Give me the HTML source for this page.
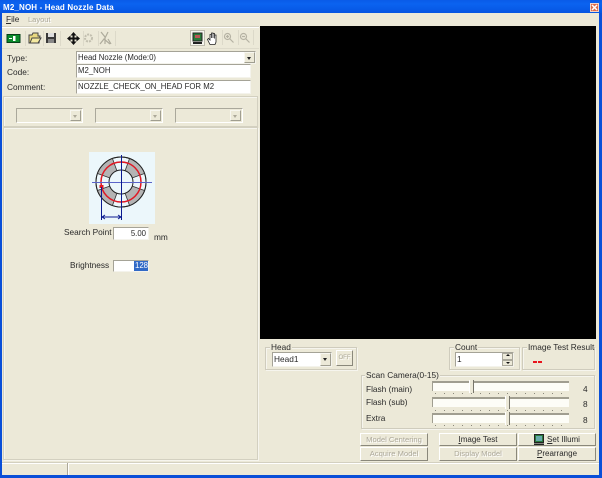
<!DOCTYPE html>
<html><head><meta charset="utf-8">
<style>
html,body{margin:0;padding:0}
body{width:602px;height:478px;overflow:hidden;position:relative;background:#ece9d8;font:8.3px "Liberation Sans",sans-serif;color:#2a2a2a}
div,span{position:absolute;box-sizing:border-box;white-space:nowrap}
.t{line-height:11px;height:11px}
.dis{color:#aca899;text-shadow:1px 1px 0 #fff}
.input{background:#fff;border:1px solid;border-color:#a5a397 #f4f3ec #f4f3ec #a5a397;line-height:11px;padding-left:1px;font-size:7.8px}
.combod{background:#ece9d8;border:1px solid;border-color:#aaa89b #fff #fff #aaa89b}
.arr{right:1px;top:1px;bottom:1px;width:11px;background:#ece9d8;border:1px solid;border-color:#f8f7f0 #a09e90 #a09e90 #f8f7f0}
.arr:after{content:"";position:absolute;left:2px;top:4px;border:2.5px solid transparent;border-top:3px solid #222;border-bottom:0}
.arr.d:after{border-top-color:#aca899}
.grp{border:1px solid #cfccbd;box-shadow:inset 1px 1px 0 #f6f5ee,1px 1px 0 #f6f5ee}
.glabel{background:#ece9d8;line-height:11px;height:11px;padding:0 1px}
.btn{background:#ece9d8;border:1px solid;border-color:#fff #8a887b #8a887b #fff;text-align:center;line-height:12px;font-size:8px}
.btn.dis{font-size:7.6px}
.slider{left:432px;width:137px;background:#fdfdf7;border-top:2px solid #a09e90;border-left:1px solid #a09e90}
.thumb{width:5px;height:13px;background:#ece9d8;border-right:1px solid #77756a;border-left:1px solid #fff;z-index:2}
.ticks{left:435px;width:131px;height:1px;background:repeating-linear-gradient(90deg,#8a887b 0 1px,transparent 1px 9px)}
</style></head><body>
<div style="left:0;top:0;width:602px;height:478px;border:solid #0a4fd8;border-width:0 3px 3px 2px;z-index:5;pointer-events:none"></div>
<div style="left:0;top:0;width:602px;height:13px;background:linear-gradient(180deg,#0a5be8,#0b63f0 30%,#0655e2);z-index:6"></div>
<div class="t" style="left:3px;top:2px;color:#fff;font-weight:bold;font-size:8px;letter-spacing:.15px;z-index:7">M2_NOH - Head Nozzle Data</div>
<div style="left:590px;top:3px;width:9px;height:9px;background:#dc6a4a;border:1px solid #f3d5c8;z-index:7"><svg style="position:absolute;left:0;top:0" width="7" height="7"><path d="M1 1L6 6M6 1L1 6" stroke="#fff" stroke-width="1.5"/></svg></div>

<div class="t" style="left:6px;top:14px"><u>F</u>ile</div>
<div class="t dis" style="left:28px;top:14px;font-size:7.5px">Layout</div>
<div style="left:2px;top:26px;width:257px;height:1px;background:#d3d0c0"></div>
<div style="left:2px;top:27px;width:257px;height:1px;background:#fff"></div>
<div style="left:2px;top:48px;width:257px;height:1px;background:#dedbcb"></div>

<!-- toolbar icons -->
<svg style="position:absolute;left:0;top:26px" width="260" height="24">
<rect x="7" y="8.500" width="13" height="8" fill="#0a8a2a" stroke="#06401a"/><rect x="13" y="10" width="2.500" height="5" fill="#fff"/><path d="M9 12.500h3" stroke="#fff"/>
<path d="M29 17V9h3l1-2h5v3h2l-1 7z" fill="#e8d880" stroke="#444"/><path d="M30 17l2-5h9l-3 5z" fill="#f4e9a0" stroke="#444"/>
<rect x="46" y="7" width="10" height="10" fill="#3a3a3a"/><rect x="48" y="7" width="6" height="4" fill="#ddd"/><rect x="48" y="13" width="6" height="4" fill="#888"/>
<path d="M73.500 8v9M69 12.500h9" stroke="#111" stroke-width="2"/><path d="M73.500 6l-3 3.500h6zM73.500 19l-3-3.500h6zM67 12.500l3.500-3v6zM80 12.500l-3.500-3v6z" fill="#111"/>
<circle cx="88.500" cy="12" r="3.500" fill="none" stroke="#c2bfaf" stroke-width="2" stroke-dasharray="2 1"/>
<path d="M101 6l4 5v7M108 6l-3 6M100 18l4-5 6 5M108 13l3 5" fill="none" stroke="#aeab9c" stroke-width="1.200"/>
<rect x="190.500" y="4.500" width="14" height="15" fill="#f6f5ee" stroke="#bdbbad"/>
<rect x="193" y="7" width="9" height="8" fill="#2a7a3a" stroke="#222"/><rect x="195" y="9" width="5" height="3" fill="#b55"/><rect x="193" y="16" width="9" height="2" fill="#222"/>
<path d="M210 18.500L207.500 13.500l1-1 1.500 1.500V8.500h1.500V12V7h1.500v5V7.500h1.500V12.500V9h1.500v7l-1 2.500z" fill="#fff" stroke="#222" stroke-width=".8"/>
<circle cx="227.500" cy="10.500" r="3" fill="none" stroke="#b5b2a3" stroke-width="1.200"/><path d="M229.500 12.500l4 4M226 10.500h3M227.500 9v3" stroke="#b5b2a3" stroke-width="1.200"/>
<circle cx="243.500" cy="10.500" r="3" fill="none" stroke="#b5b2a3" stroke-width="1.200"/><path d="M245.500 12.500l4 4M242 10.500h3" stroke="#b5b2a3" stroke-width="1.200"/>
<path d="M222.500 4v15M238.500 4v15M253.500 4v15M60.500 5v15M98.500 5v15M115.500 5v15M25.500 5v15M43.500 5v15M83.500 5v15" stroke="#dcd9c9"/>
</svg>

<!-- form -->
<div class="t" style="left:7px;top:53px">Type:</div>
<div class="t" style="left:7px;top:67px">Code:</div>
<div class="t" style="left:7px;top:82px">Comment:</div>
<div class="input" style="left:76px;top:51px;width:180px;height:13px">Head Nozzle (Mode:0)<span class="arr" style="right:0;top:0;bottom:0"></span></div>
<div class="input" style="left:76px;top:64px;width:175px;height:14px">M2_NOH</div>
<div class="input" style="left:76px;top:80px;width:175px;height:14px">NOZZLE_CHECK_ON_HEAD FOR M2</div>

<div style="left:3px;top:96px;width:255px;height:31px;border:1px solid #d3d0c0;box-shadow:inset 1px 1px 0 #f6f5ee"></div>
<div class="combod" style="left:16px;top:108px;width:67px;height:15px"><span class="arr d"></span></div>
<div class="combod" style="left:95px;top:108px;width:68px;height:15px"><span class="arr d"></span></div>
<div class="combod" style="left:175px;top:108px;width:68px;height:15px"><span class="arr d"></span></div>
<div style="left:3px;top:127px;width:255px;height:333px;border:1px solid #d3d0c0;box-shadow:inset 1px 1px 0 #f6f5ee,1px 1px 0 #f6f5ee"></div>

<!-- nozzle diagram -->
<svg style="position:absolute;left:89px;top:152px" width="66" height="72">
<rect width="66" height="72" fill="#ecf7fb"/>
<circle cx="32" cy="30" r="25" fill="#ecf7fb" stroke="#222"/>
<circle cx="32" cy="30" r="18.500" fill="none" stroke="#b4b4b4" stroke-width="13" stroke-dasharray="16.100 12.950" stroke-dashoffset="-6.460"/>
<circle cx="32" cy="30" r="25" fill="none" stroke="#222"/>
<circle cx="32" cy="30" r="12" fill="#ecf7fb" stroke="#222"/>
<path d="M43.300 34.100L55.500 38.550M43.300 25.900L55.500 21.450M20.700 34.100L8.500 38.550M20.700 25.900L8.500 21.450M36.100 41.300L40.550 53.500M27.900 41.300L23.450 53.500M36.100 18.700L40.550 6.500M27.900 18.700L23.450 6.500" stroke="#333" stroke-width=".8"/>
<circle cx="32" cy="30" r="20" fill="none" stroke="#e01824" stroke-width="1.500"/>
<rect x="10.500" y="33" width="4" height="3" fill="#e01824"/>
<path d="M3 30.500H63" stroke="#5a64c8"/>
<path d="M32.500 3V68M12.500 35V68" stroke="#0a1a90"/>
<path d="M13 65H32M13 65l3-2M13 65l3 2M32 65l-3-2M32 65l-3 2" stroke="#0a1a90" fill="none"/>
</svg>
<div class="t" style="left:64px;top:227px">Search Point</div>
<div class="input" style="left:113px;top:227px;width:36px;height:13px;text-align:right;padding-right:2px">5.00</div>
<div class="t" style="left:154px;top:232px">mm</div>
<div class="t" style="left:70px;top:260px">Brightness</div>
<div class="input" style="left:113px;top:260px;width:36px;height:12px"><span style="right:0;top:0;width:14px;height:10px;background:#3169c6;color:#fff;line-height:10px;text-align:right">128</span></div>

<!-- video -->
<div style="left:260px;top:26px;width:336px;height:313px;background:#000"></div>

<!-- head -->
<div class="grp" style="left:265px;top:347px;width:92px;height:23px"></div>
<div class="glabel" style="left:270px;top:342px">Head</div>
<div class="input" style="left:272px;top:352px;width:60px;height:15px;line-height:13px;font-size:8.3px">Head1<span class="arr" style="right:0;top:0;bottom:0"></span></div>
<div class="btn dis" style="left:336px;top:350px;width:17px;height:16px;font-size:6px;line-height:14px">OFF</div>

<!-- count -->
<div class="grp" style="left:449px;top:347px;width:71px;height:23px"></div>
<div class="glabel" style="left:454px;top:342px">Count</div>
<div class="input" style="left:455px;top:352px;width:59px;height:15px;line-height:13px;font-size:8.3px">1
<span style="right:0;top:0;width:11px;height:6.500px;background:#ece9d8;border:1px solid #aaa89b"></span>
<span style="right:0;top:6.500px;width:11px;height:6.500px;background:#ece9d8;border:1px solid #aaa89b"></span>
<span style="right:3px;top:1px;border:2px solid transparent;border-bottom:2px solid #111;border-top:0"></span>
<span style="right:3px;top:9px;border:2px solid transparent;border-top:2px solid #111;border-bottom:0"></span></div>

<!-- result -->
<div class="grp" style="left:522px;top:347px;width:73px;height:23px"></div>
<div class="glabel" style="left:527px;top:342px;padding:0 0 0 1px">Image Test Result</div>
<div style="left:533px;top:361px;width:4px;height:2px;background:#e8141c"></div>
<div style="left:538px;top:361px;width:4px;height:2px;background:#e8141c"></div>

<!-- scan camera -->
<div class="grp" style="left:361px;top:375px;width:234px;height:54px"></div>
<div class="glabel" style="left:365px;top:370px">Scan Camera(0-15)</div>
<div class="t" style="left:366px;top:384px">Flash (main)</div>
<div class="t" style="left:366px;top:397px">Flash (sub)</div>
<div class="t" style="left:366px;top:413px">Extra</div>
<div class="slider" style="top:381px;height:10px"></div><div class="thumb" style="left:469px;top:380px"></div><div class="ticks" style="top:393px"></div>
<div class="slider" style="top:397px;height:10px"></div><div class="thumb" style="left:505px;top:396px"></div><div class="ticks" style="top:410px"></div>
<div class="slider" style="top:413px;height:10px"></div><div class="thumb" style="left:505px;top:412px"></div><div class="ticks" style="top:425px"></div>
<div class="t" style="left:583px;top:384px">4</div>
<div class="t" style="left:583px;top:399px">8</div>
<div class="t" style="left:583px;top:415px">8</div>

<!-- buttons -->
<div class="btn dis" style="left:360px;top:433px;width:68px;height:13px;line-height:11px">Model Centering</div>
<div class="btn" style="left:439px;top:433px;width:78px;height:13px;line-height:11px"><u>I</u>mage Test</div>
<div class="btn" style="left:518px;top:433px;width:78px;height:13px;line-height:11px;padding-left:13px"><u>S</u>et Illumi</div>
<svg style="position:absolute;left:533px;top:434px" width="12" height="12"><rect x="1.500" y=".5" width="9" height="8" fill="#2a7a3a" stroke="#222"/><rect x="3" y="2" width="6" height="5" fill="#6aa"/><rect x="1" y="9.500" width="10" height="1.500" fill="#222"/></svg>
<div class="btn dis" style="left:360px;top:447px;width:68px;height:14px">Acquire Model</div>
<div class="btn dis" style="left:439px;top:447px;width:78px;height:14px">Display Model</div>
<div class="btn" style="left:518px;top:447px;width:78px;height:14px"><u>P</u>rearrange</div>

<!-- status bar -->
<div style="left:2px;top:462px;width:597px;height:1px;background:#d3d0c0"></div>
<div style="left:2px;top:463px;width:597px;height:1px;background:#fff"></div>
<div style="left:67px;top:463px;width:1px;height:12px;background:#aca899"></div>
<div style="left:68px;top:463px;width:1px;height:12px;background:#fff"></div>
</body></html>
